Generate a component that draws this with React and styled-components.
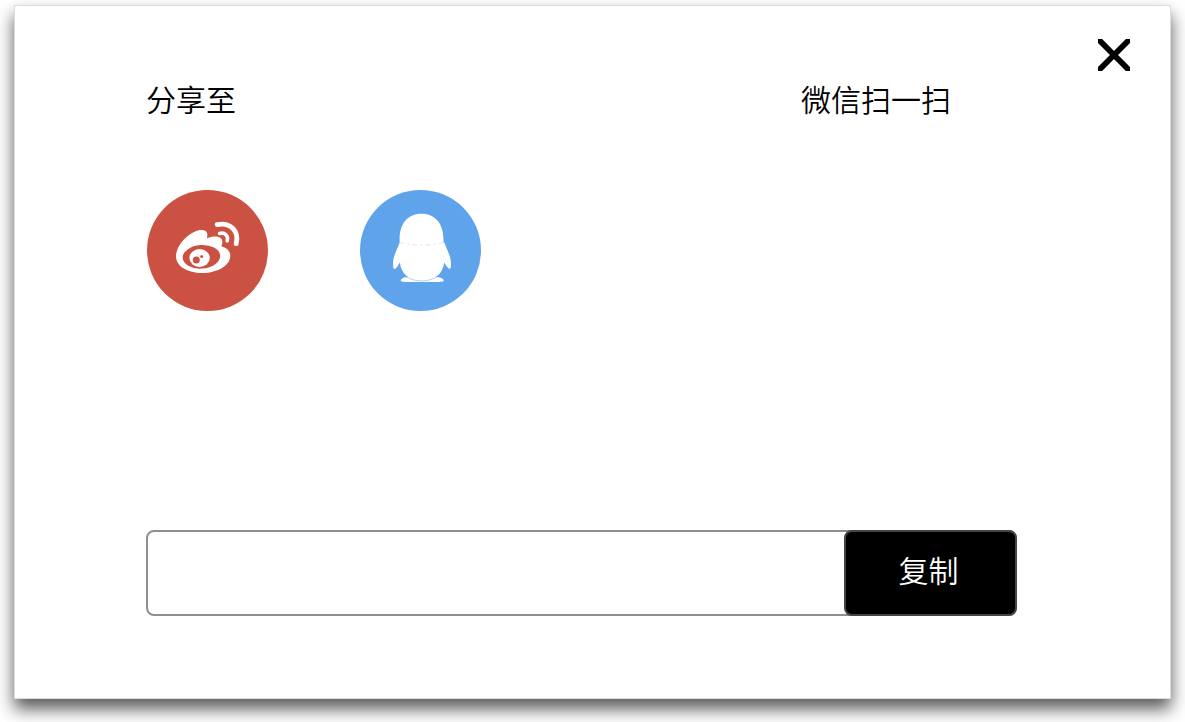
import React, { useState } from "react";
import styled, { createGlobalStyle } from "styled-components";

const Share = () => {
  const [link, setLink] = useState("");

  const copyLink = () => {
    if (navigator.clipboard) {
      navigator.clipboard.writeText(link);
    }
  };

  return (
    <>
      <GlobalStyle />
      <Dialog role="dialog" aria-label="分享至">
        <CloseButton type="button" aria-label="关闭">
          <CloseIcon />
        </CloseButton>
        <Columns>
          <ShareColumn>
            <Title>分享至</Title>
            <IconList>
              <IconLink href="#weibo" aria-label="微博" $color="#cb5143">
                <WeiboIcon />
              </IconLink>
              <IconLink href="#qq" aria-label="QQ" $color="#5fa3ea">
                <QQIcon />
              </IconLink>
            </IconList>
          </ShareColumn>
          <ScanColumn>
            <Title>微信扫一扫</Title>
            {/* qr code */}
          </ScanColumn>
        </Columns>
        <CopyBar>
          <CopyInput
            type="text"
            aria-label="链接"
            value={link}
            onChange={(e) => setLink(e.target.value)}
          />
          <CopyButton type="button" onClick={copyLink}>
            复制
          </CopyButton>
        </CopyBar>
      </Dialog>
    </>
  );
};

// Icons

const CloseIcon = () => (
  <svg viewBox="0 0 32 32" width="32" height="32" aria-hidden="true">
    <path d="M-3 -3L35 35M35 -3L-3 35" stroke="#000" strokeWidth="5.8" />
  </svg>
);

const WeiboIcon = () => (
  <svg viewBox="0 0 121 121" aria-hidden="true">
    <path
      fill="#fff"
      d="M29 66.5C29 60 33 53 39 47.5C45 42 51 39.5 55.5 40C60 40.5 61.3 43.5 59.8 48.4C65 46.2 70 45.8 73 47.6C75.8 49.4 76 52.5 74.4 56.3C80 58 83.3 61 83.3 66C83.3 75 71 83 55.5 83C40 83 29 76 29 66.5Z"
    />
    <ellipse
      cx="54.4"
      cy="66.8"
      rx="18.8"
      ry="11.8"
      fill="#cb5143"
      transform="rotate(-4 54.4 66.8)"
    />
    <ellipse cx="52.6" cy="68" rx="10.2" ry="9" fill="#fff" />
    <circle cx="49.3" cy="70" r="3.5" fill="#cb5143" />
    <circle cx="54.7" cy="66.4" r="1.5" fill="#cb5143" />
    <g fill="none" stroke="#fff" strokeLinecap="round">
      <path d="M70.2 34.6C83 31.8 92.4 41 89.2 53.6" strokeWidth="4.8" />
      <path d="M72.6 43.5C78 42 81.6 46 80.2 50.8" strokeWidth="3.6" />
    </g>
  </svg>
);

const QQIcon = () => (
  <svg viewBox="0 0 121 121" aria-hidden="true">
    <g fill="#fff">
      <path d="M39.7 52.5C38.6 36 46 23.8 61.5 23.8C77 23.8 84.4 36 83.4 52.5L84.3 52.5C87 60 91 66 91 74C91 76.5 90.6 78.8 89.8 78.8C88 78.8 86 75.5 84.2 72.5C83 84 74 91 62 91C50 91 41 84 39.8 72.5C38 75.5 36 79 34.3 79C33.4 79 33 76.5 33 74C33 66 37 60 39.7 52.5Z" />
      <path d="M46.5 87C43 87.5 40.7 89 40.7 90.5C40.7 91.8 43 92 48 92H76C81 92 83.7 91.8 83.7 90.5C83.7 89 80.5 87.2 77 87Z" />
    </g>
    <g fill="none" stroke="#5fa3ea" strokeWidth="0.6">
      <path
        d="M39.7 52.5C53 56 71 56 84.3 52.3"
        strokeDasharray="5 3 2 3"
        opacity="0.4"
      />
      <path d="M46 86.5C54 92.4 69 92.4 77.5 86.5" opacity="0.8" />
    </g>
  </svg>
);

// Styled components

const GlobalStyle = createGlobalStyle`
  * {
    box-sizing: border-box;
  }

  body {
    margin: 0;
    background-color: #fff;
    font-family: "Noto Sans CJK SC", sans-serif;
    font-weight: 350;
    color: #000;
  }
`;

const Dialog = styled.div`
  position: relative;
  margin: 5px 14px 23px;
  padding: 72px 153px 82px 131px;
  border: 1px solid #dcdcdc;
  background-color: #fff;
  box-shadow: 0 10px 16px rgba(0, 0, 0, 0.65);
`;

const CloseButton = styled.button`
  position: absolute;
  top: 33px;
  right: 40px;
  padding: 0;
  border: none;
  background: none;
  cursor: pointer;

  svg {
    display: block;
  }
`;

const Columns = styled.div`
  display: flex;
  justify-content: space-between;
  min-height: 452px;
`;

const ShareColumn = styled.section``;

const ScanColumn = styled.section`
  width: 216px;
`;

const Title = styled.h2`
  margin: 0;
  font-size: 30px;
  font-weight: 350;
  line-height: 40px;
`;

const IconList = styled.div`
  display: flex;
  gap: 92px;
  padding: 72px 0 0 1px;
`;

const IconLink = styled.a`
  width: 121px;
  height: 121px;
  border-radius: 50%;
  background-color: ${(props) => props.$color};

  svg {
    display: block;
  }
`;

const CopyBar = styled.div`
  display: flex;
  height: 86px;
  border: 2px solid #8f8f8f;
  border-radius: 8px;
  background-color: #fff;
`;

const CopyInput = styled.input`
  flex: 1;
  min-width: 0;
  padding: 0 24px;
  border: none;
  border-radius: 8px;
  background: none;
  font: inherit;
  font-size: 30px;
  outline: none;
`;

const CopyButton = styled.button`
  width: 173px;
  margin: -2px;
  padding: 0 4px 8px 0;
  border: 2px solid #444;
  border-radius: 8px;
  background-color: #000;
  color: #fff;
  font: inherit;
  font-size: 30px;
  cursor: pointer;
`;

export default Share;
